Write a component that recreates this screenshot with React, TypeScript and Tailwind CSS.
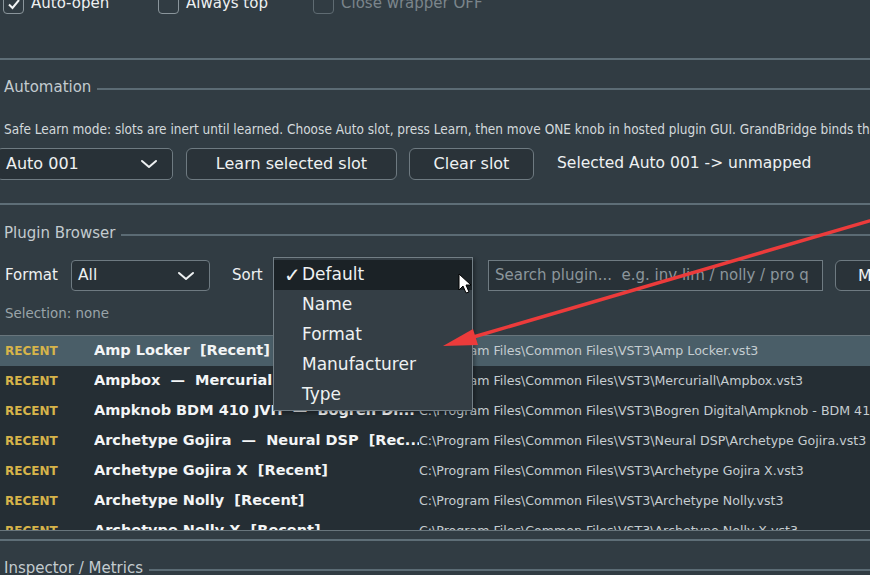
import React from "react";

// Ligne de titre de groupe : libellé + filet horizontal jusqu'au bord droit.
function GroupTitle({ label }: { label: string }) {
  return (
    <div className="flex items-center gap-[6px] h-[20px] pl-[4px]">
      <span className="text-[15px] text-[#c3cbcf] whitespace-nowrap leading-none">{label}</span>
      <div className="flex-1 h-[2px] bg-[#5b6b74] mt-[3px]" />
    </div>
  );
}

function Chevron() {
  return (
    <svg width="18" height="10" viewBox="0 0 18 10" className="shrink-0">
      <path d="M2 2 L9 8 L16 2" stroke="#eef1f2" strokeWidth="2" fill="none" strokeLinecap="round" strokeLinejoin="round" />
    </svg>
  );
}

function Check({ label, checked = false, disabled = false }: { label: string; checked?: boolean; disabled?: boolean }) {
  return (
    <div className="flex items-center gap-[7px]">
      <div
        className={
          "w-[21px] h-[21px] rounded-[4px] border flex items-center justify-center " +
          (disabled ? "border-[#5f6b72]" : "border-[#8a959b]")
        }
      >
        {checked && (
          <svg width="14" height="12" viewBox="0 0 14 12">
            <path d="M2 6.5 L5.5 10 L12 2" stroke="#f2f4f5" strokeWidth="2" fill="none" />
          </svg>
        )}
      </div>
      <span className={"text-[15px] leading-none " + (disabled ? "text-[#7b858b]" : "text-[#eef1f2]")}>{label}</span>
    </div>
  );
}

const rows = [
  { name: "Amp Locker  [Recent]", path: "C:\\Program Files\\Common Files\\VST3\\Amp Locker.vst3", sel: true },
  { name: "Ampbox  —  Mercuriall  [Recent]", path: "C:\\Program Files\\Common Files\\VST3\\Mercuriall\\Ampbox.vst3" },
  { name: "Ampknob BDM 410 JVH  —  Bogren Di...", path: "C:\\Program Files\\Common Files\\VST3\\Bogren Digital\\Ampknob - BDM 410 JVH.vst3" },
  { name: "Archetype Gojira  —  Neural DSP  [Rec...", path: "C:\\Program Files\\Common Files\\VST3\\Neural DSP\\Archetype Gojira.vst3" },
  { name: "Archetype Gojira X  [Recent]", path: "C:\\Program Files\\Common Files\\VST3\\Archetype Gojira X.vst3" },
  { name: "Archetype Nolly  [Recent]", path: "C:\\Program Files\\Common Files\\VST3\\Archetype Nolly.vst3" },
  { name: "Archetype Nolly X  [Recent]", path: "C:\\Program Files\\Common Files\\VST3\\Archetype Nolly X.vst3" },
];

const sortItems = ["Default", "Name", "Format", "Manufacturer", "Type"];

export default function App() {
  return (
    <div className="relative w-[870px] h-[575px] overflow-hidden bg-[#313c43] font-['DejaVu_Sans',sans-serif] text-[#eef1f2]">
      {/* ── Options du haut (coupées par le bord) ── */}
      <div className="flex items-center h-[21px] -mt-[7px] pl-[3px]">
        <div className="w-[155px]"><Check label="Auto-open" checked /></div>
        <div className="w-[155px]"><Check label="Always top" /></div>
        <Check label="Close wrapper OFF" disabled />
      </div>

      <div className="h-[2px] bg-[#5e6e77] mt-[44px]" />

      {/* ── AUTOMATION ── */}
      <div className="mt-[17px]">
        <GroupTitle label="Automation" />
      </div>
      <div className="mt-[24px] h-[16px] pl-[4px] whitespace-nowrap text-[13.5px] leading-[16px] text-[#d3d9dc] font-['DejaVu_Sans_Condensed','DejaVu_Sans',sans-serif] font-stretch-condensed">
        Safe Learn mode: slots are inert until learned. Choose Auto slot, press Learn, then move ONE knob in hosted plugin GUI. GrandBridge binds that knob to the slot.
      </div>
      <div className="mt-[11px] flex items-center h-[32px]">
        <div className="-ml-[3px] w-[176px] shrink-0 h-[32px] flex items-center justify-between pl-[8px] pr-[14px] rounded-[5px] border border-[#6e7a81] bg-[#283137]">
          <span className="text-[16px]">Auto 001</span>
          <Chevron />
        </div>
        <button className="ml-[13px] w-[211px] shrink-0 h-[32px] rounded-[6px] border border-[#6e7a81] bg-[#2a3339] text-[16px]">
          Learn selected slot
        </button>
        <button className="ml-[12px] w-[125px] shrink-0 h-[32px] rounded-[6px] border border-[#6e7a81] bg-[#2a3339] text-[16px]">
          Clear slot
        </button>
        <span className="ml-[23px] text-[15.5px] whitespace-nowrap">Selected Auto 001 -&gt; unmapped</span>
      </div>

      <div className="h-[2px] bg-[#5e6e77] mt-[23px]" />

      {/* ── PLUGIN BROWSER ── */}
      <div className="mt-[18px]">
        <GroupTitle label="Plugin Browser" />
      </div>
      <div className="mt-[17px] flex items-center h-[31px] pl-[5px]">
        <span className="text-[15px] w-[66px] shrink-0">Format</span>
        <div className="w-[139px] shrink-0 h-[31px] flex items-center justify-between pl-[6px] pr-[14px] rounded-[4px] border border-[#6e7a81] bg-[#283137]">
          <span className="text-[15.5px]">All</span>
          <Chevron />
        </div>
        <span className="ml-[22px] text-[15px] w-[41px] shrink-0">Sort</span>
        <div className="relative w-[200px] shrink-0 h-[31px]">
          {/* menu déroulant ouvert */}
          <div className="absolute left-0 -top-[3px] w-[200px] h-[154px] border border-[#737f86] bg-[#343e45] pt-[2px] z-10 shadow-[2px_2px_4px_rgba(0,0,0,0.35)]">
            {sortItems.map((it, i) => (
              <div
                key={it}
                className={"flex items-center h-[30px] text-[17px] " + (i === 0 ? "bg-[#1b2226]" : "")}
              >
                <span className="w-[28px] pl-[10px] text-[20px] leading-none font-bold">{i === 0 ? "✓" : ""}</span>
                <span>{it}</span>
              </div>
            ))}
          </div>
        </div>
        <div className="ml-[15px] w-[335px] shrink-0 h-[31px] flex items-center pl-[6px] border border-[#6f7b82] bg-[#283137]">
          <span className="text-[15px] text-[#8c969c] whitespace-pre">Search plugin...  e.g. inv lim / nolly / pro q</span>
        </div>
        <button className="ml-[12px] w-[80px] h-[31px] shrink-0 rounded-[6px] border border-[#6e7a81] bg-[#2a3339] text-[16px] text-left pl-[22px]">
          Manual
        </button>
      </div>
      <div className="mt-[15px] h-[16px] pl-[5px] text-[13.4px] leading-[16px] text-[#9aa4a9]">Selection: none</div>

      {/* Liste des plugins */}
      <div className="mt-[13px] h-[196px] border-y border-[#68757c] bg-[#252e34] overflow-hidden">
        {rows.map((r) => (
          <div key={r.name} className={"flex items-center h-[30px] whitespace-pre " + (r.sel ? "bg-[#4a5e68]" : "")}>
            <span className="w-[94px] shrink-0 pl-[5px] text-[12px] font-bold text-[#d7b44a]">RECENT</span>
            <span className="w-[325px] shrink-0 overflow-hidden text-[14.5px] font-bold text-[#f3f5f6]">{r.name}</span>
            <span className="flex-1 overflow-hidden text-[12.6px] text-[#c5cdd1]">{r.path}</span>
          </div>
        ))}
      </div>

      <div className="h-[2px] bg-[#5e6e77] mt-[8px]" />

      {/* ── INSPECTOR ── */}
      <div className="mt-[17px]">
        <GroupTitle label="Inspector / Metrics" />
      </div>

      {/* Annotation : flèche rouge + curseur */}
      <svg className="absolute left-0 top-0 pointer-events-none z-20" width="870" height="575" viewBox="0 0 870 575">
        <line x1="900" y1="212" x2="470" y2="338" stroke="#ec3b3b" strokeWidth="3.5" strokeLinecap="round" />
        <polygon points="443,346 473,329 478,345" fill="#ec3b3b" />
        <path d="M459 274 L459 290 L463 286 L466 293 L469 292 L466 285 L471 285 Z" fill="#ffffff" stroke="#000000" strokeWidth="1" strokeLinejoin="round" />
      </svg>
    </div>
  );
}
